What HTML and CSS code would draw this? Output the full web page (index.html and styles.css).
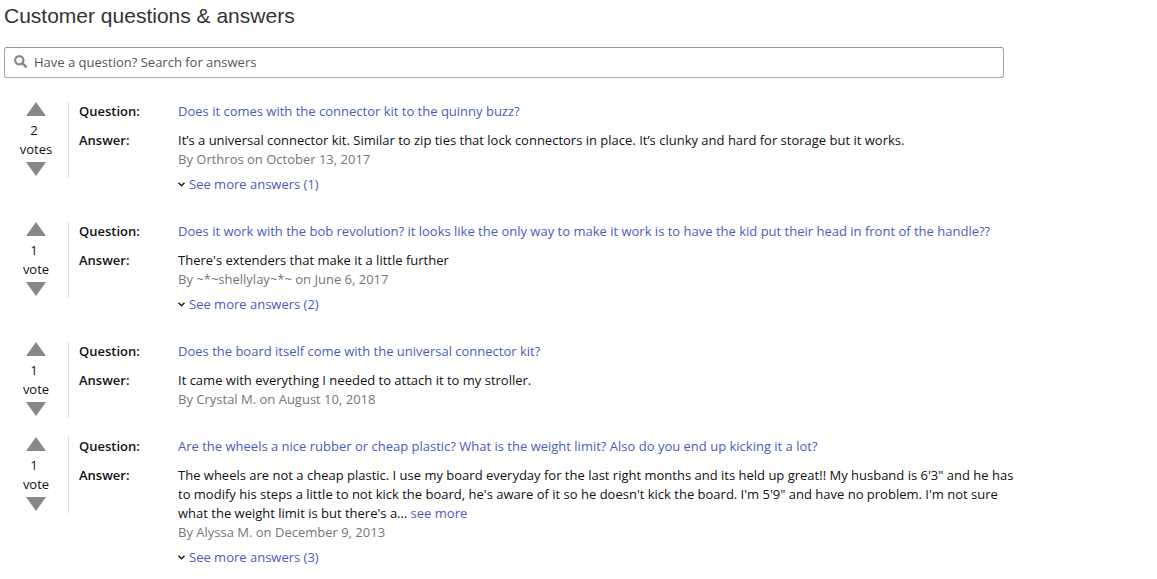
FILE: index.html
```html
<!DOCTYPE html>
<html lang="en">
<head>
    <meta charset="UTF-8">
    <meta name="viewport" content="width=device-width, initial-scale=1.0">
    <title>Customer questions &amp; answers</title>
    <link rel="stylesheet" href="styles.css">
</head>
<body>
    <div class="container">
        <h1>Customer questions &amp; answers</h1>

        <form class="search">
            <label for="search-input" class="search-label">
                <svg class="search-icon" viewBox="0 0 14 14"><circle cx="5.3" cy="5.3" r="4.1" fill="none" stroke="#888" stroke-width="2.2"/><path d="M8.4 8.4L12.6 12.2" stroke="#888" stroke-width="2.5"/></svg>
            </label>
            <input type="search" id="search-input" aria-label="Search for answers" placeholder="Have a question? Search for answers">
        </form>

        <div class="item">
            <div class="votes">
                <button type="button" class="vote up" aria-label="Vote up"></button>
                <span class="count">2</span>
                <span>votes</span>
                <button type="button" class="vote down" aria-label="Vote down"></button>
            </div>
            <div class="content">
                <div class="row">
                    <b class="label">Question:</b>
                    <a href="#">Does it comes with the connector kit to the quinny buzz?</a>
                </div>
                <div class="row">
                    <b class="label">Answer:</b>
                    <div class="text">
                        <div>It’s a universal connector kit. Similar to zip ties that lock connectors in place. It’s clunky and hard for storage but it works.</div>
                        <div class="author">By Orthros on October 13, 2017</div>
                        <a href="#" class="more"><svg class="chevron" viewBox="0 0 7 5"><path d="M0.5 0.8L3.5 3.8L6.5 0.8" fill="none" stroke="#111" stroke-width="1.3"/></svg>See more answers (1)</a>
                    </div>
                </div>
            </div>
        </div>

        <div class="item">
            <div class="votes">
                <button type="button" class="vote up" aria-label="Vote up"></button>
                <span class="count">1</span>
                <span>vote</span>
                <button type="button" class="vote down" aria-label="Vote down"></button>
            </div>
            <div class="content">
                <div class="row">
                    <b class="label">Question:</b>
                    <a href="#">Does it work with the bob revolution? it looks like the only way to make it work is to have the kid put their head in front of the handle??</a>
                </div>
                <div class="row">
                    <b class="label">Answer:</b>
                    <div class="text">
                        <div>There's extenders that make it a little further</div>
                        <div class="author">By ~*~shellylay~*~ on June 6, 2017</div>
                        <a href="#" class="more"><svg class="chevron" viewBox="0 0 7 5"><path d="M0.5 0.8L3.5 3.8L6.5 0.8" fill="none" stroke="#111" stroke-width="1.3"/></svg>See more answers (2)</a>
                    </div>
                </div>
            </div>
        </div>

        <div class="item">
            <div class="votes">
                <button type="button" class="vote up" aria-label="Vote up"></button>
                <span class="count">1</span>
                <span>vote</span>
                <button type="button" class="vote down" aria-label="Vote down"></button>
            </div>
            <div class="content">
                <div class="row">
                    <b class="label">Question:</b>
                    <a href="#">Does the board itself come with the universal connector kit?</a>
                </div>
                <div class="row">
                    <b class="label">Answer:</b>
                    <div class="text">
                        <div>It came with everything I needed to attach it to my stroller.</div>
                        <div class="author">By Crystal M. on August 10, 2018</div>
                    </div>
                </div>
            </div>
        </div>

        <div class="item">
            <div class="votes">
                <button type="button" class="vote up" aria-label="Vote up"></button>
                <span class="count">1</span>
                <span>vote</span>
                <button type="button" class="vote down" aria-label="Vote down"></button>
            </div>
            <div class="content">
                <div class="row">
                    <b class="label">Question:</b>
                    <a href="#">Are the wheels a nice rubber or cheap plastic? What is the weight limit? Also do you end up kicking it a lot?</a>
                </div>
                <div class="row">
                    <b class="label">Answer:</b>
                    <div class="text">
                        <div>The wheels are not a cheap plastic. I use my board everyday for the last right months and its held up great!! My husband is 6'3" and he has to modify his steps a little to not kick the board, he's aware of it so he doesn't kick the board. I'm 5'9" and have no problem. I'm not sure what the weight limit is but there's a… <a href="#">see more</a></div>
                        <div class="author">By Alyssa M. on December 9, 2013</div>
                        <a href="#" class="more"><svg class="chevron" viewBox="0 0 7 5"><path d="M0.5 0.8L3.5 3.8L6.5 0.8" fill="none" stroke="#111" stroke-width="1.3"/></svg>See more answers (3)</a>
                    </div>
                </div>
            </div>
        </div>
    </div>
</body>
</html>
```
FILE: styles.css
```css
* {
    box-sizing: border-box;
}

body {
    font-family: "Open Sans", "Noto Sans", sans-serif;
    font-size: 13px;
    line-height: 19px;
    color: #111;
    background: #fff;
    margin: 0;
    padding: 2px 4px 0;
}

a {
    color: #4a5cc0;
    text-decoration: none;
}

a:hover {
    text-decoration: underline;
}

.container {
    max-width: 1024px;
}

h1 {
    font-family: "Liberation Sans", Arial, sans-serif;
    font-size: 21px;
    font-weight: normal;
    line-height: 28px;
    color: #333;
    margin: 0 0 17px;
}

.search {
    display: flex;
    align-items: center;
    max-width: 1000px;
    height: 31px;
    margin-bottom: 24px;
    padding: 0 9px;
    border: 1px solid #a6a6a6;
    border-top-color: #949494;
    border-radius: 3px;
}

.search-label {
    display: flex;
    padding-bottom: 2px;
}

.search-icon {
    width: 14px;
    height: 14px;
}

.search input {
    flex: 1;
    font: inherit;
    color: #111;
    background: none;
    border: none;
    outline: none;
    padding: 0 6px;
}

.search input::placeholder {
    color: #555;
    opacity: 1;
}

.item {
    display: flex;
    align-items: flex-start;
    margin-bottom: 19px;
}

.votes {
    display: flex;
    flex-direction: column;
    align-items: center;
    width: 65px;
    height: 76px;
    border-right: 1px solid #ddd;
}

.count {
    padding-right: 4px;
}

/* triangles */
.vote {
    width: 20px;
    height: 14px;
    padding: 0;
    border: none;
    background: #888;
    cursor: pointer;
}

.up {
    clip-path: polygon(50% 0, 100% 100%, 0 100%);
    margin-bottom: 5px;
}

.down {
    clip-path: polygon(0 0, 100% 0, 50% 100%);
    margin-top: 3px;
}

.content {
    flex: 1;
    padding: 0 0 9px 10px;
}

.row {
    display: flex;
}

.row + .row {
    margin-top: 10px;
}

.label {
    flex: none;
    width: 99px;
    font-weight: 600;
}

.text {
    flex: 1;
}

.author {
    color: #767676;
}

.more {
    display: flex;
    align-items: center;
    gap: 4px;
    margin-top: 6px;
}

.chevron {
    width: 7px;
    height: 5px;
}
```
